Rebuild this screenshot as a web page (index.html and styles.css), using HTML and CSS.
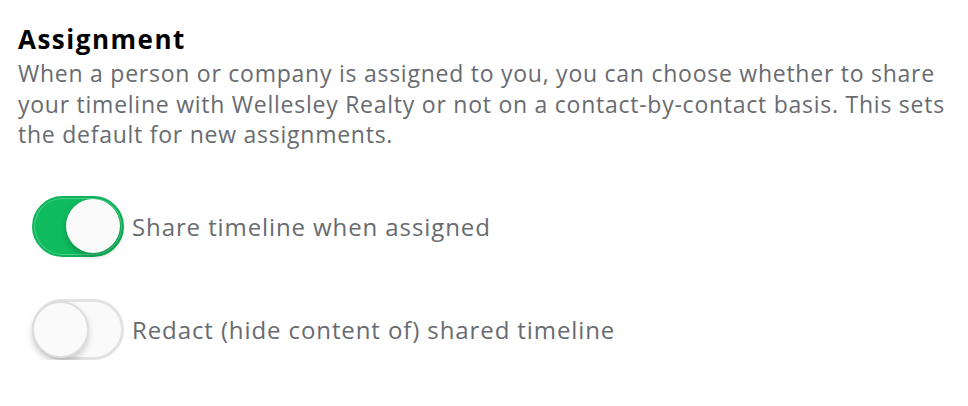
FILE: index.html
```html
<!DOCTYPE html>
<html>
<head>
<meta charset="utf-8">
<link rel="stylesheet" href="styles.css">
</head>
<body>
<section class="panel">
  <h2 class="title">Assignment</h2>
  <p class="desc">When a person or company is assigned to you, you can choose whether to share your timeline with Wellesley Realty or not on a contact-by-contact basis. This sets the default for new assignments.</p>
  <div class="options">
    <label class="option">
      <span class="toggle toggle-on"><span class="knob"></span></span>
      <span class="option-text">Share timeline when assigned</span>
    </label>
    <label class="option">
      <span class="toggle toggle-off"><span class="knob"></span></span>
      <span class="option-text">Redact (hide content of) shared timeline</span>
    </label>
  </div>
</section>
</body>
</html>
```

FILE: styles.css
```css
html, body {
  margin: 0;
  padding: 0;
  background: #ffffff;
}

.panel {
  padding: 22px 0 0 18px;
  font-family: "Open Sans", Lato, sans-serif;
}

.title {
  margin: 0 0 2px;
  font-size: 26px;
  line-height: 34px;
  font-weight: 700;
  letter-spacing: 1.5px;
  color: #000;
}

.desc {
  margin: 0;
  width: 934px;
  font-size: 23px;
  line-height: 30.5px;
  letter-spacing: 0.75px;
  color: #686b70;
}

.options {
  display: flex;
  flex-direction: column;
  gap: 42px;
  padding: 46px 0 0 14px;
}

.option {
  display: flex;
  align-items: center;
  gap: 8px;
}

.option-text {
  font-size: 24px;
  letter-spacing: 0.9px;
  color: #686b70;
}

.toggle {
  box-sizing: border-box;
  width: 92px;
  height: 61px;
  border-radius: 31px;
  display: flex;
  align-items: center;
  padding: 0 2px;
}

.toggle-on {
  background: #10bb5e;
  border: 2px solid #0fb45a;
  box-shadow: inset 0 0 0 1px #4fd08c;
  justify-content: flex-end;
}

.toggle-off {
  background: #fafafa;
  border: 3px solid #e2e2e2;
  justify-content: flex-start;
  padding: 0;
}

.knob {
  box-sizing: border-box;
  width: 54px;
  height: 54px;
  border-radius: 50%;
  background: #fafafa;
  box-shadow: 0 3px 6px rgba(0, 0, 0, 0.25);
}

.toggle-off .knob {
  width: 57px;
  height: 57px;
  margin-left: -3px;
  border: 2px solid #dedede;
  box-shadow: 0 4px 6px rgba(0, 0, 0, 0.18);
}
```
